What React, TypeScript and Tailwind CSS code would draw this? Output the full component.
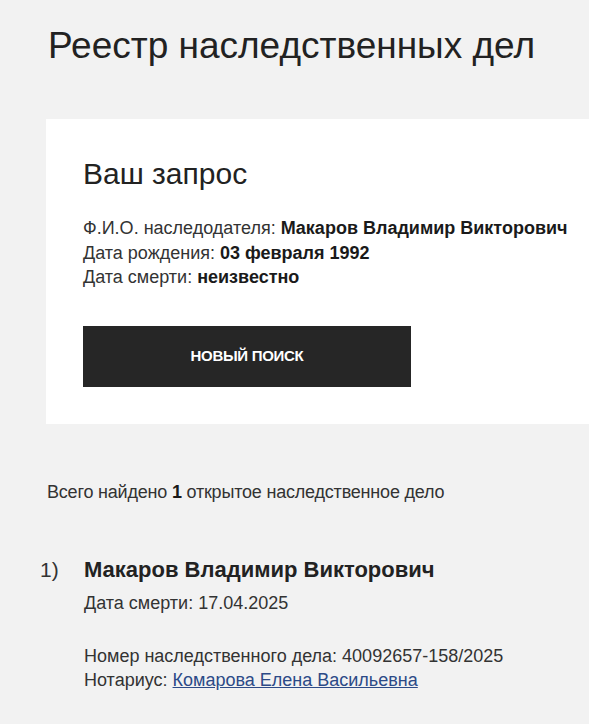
export default function App() {
  return (
    <div className="min-h-[724px] w-[589px] overflow-hidden bg-[#f2f2f2] text-[#222]" style={{ fontFamily: '"Liberation Sans", Arial, sans-serif' }}>
      <div className="pt-[25px] pl-[48px]">
        <h1 className="text-[37px] leading-[42px] font-normal">Реестр наследственных дел</h1>
      </div>
      <div className="ml-[46px] mt-[52px] w-[600px] bg-white pl-[37px] pt-[38px] pb-[37px]">
        <h2 className="text-[30px] leading-[34px] font-normal">Ваш запрос</h2>
        <div className="mt-[25px] text-[18px] leading-[24.5px] text-[#333]">
          <div>Ф.И.О. наследодателя: <b className="text-[#1a1a1a]">Макаров Владимир Викторович</b></div>
          <div>Дата рождения: <b className="text-[#1a1a1a]">03 февраля 1992</b></div>
          <div>Дата смерти: <b className="text-[#1a1a1a]">неизвестно</b></div>
        </div>
        <button className="mt-[36px] flex h-[61px] w-[328px] items-center justify-center bg-[#262626] text-[15px] font-bold text-white tracking-[-0.3px]">НОВЫЙ ПОИСК</button>
      </div>
      <div className="mt-[56px] pl-[47px] text-[18px] leading-[24px] text-[#333] tracking-[-0.2px]">
        Всего найдено <b className="text-[#1a1a1a]">1</b> открытое наследственное дело
      </div>
      <div className="mt-[51px] flex pl-[40px]">
        <div className="w-[44px] text-[21px] leading-[30px] text-[#333]">1)</div>
        <div>
          <div className="text-[22px] leading-[30px] font-bold text-[#222]">Макаров Владимир Викторович</div>
          <div className="mt-[6px] text-[18px] leading-[24px] text-[#333]">Дата смерти: 17.04.2025</div>
          <div className="mt-[29px] text-[18px] leading-[24px] text-[#333]">Номер наследственного дела: 40092657-158/2025</div>
          <div className="text-[18px] leading-[24px] text-[#333]">Нотариус: <a href="#" className="text-[#2c4a87] underline">Комарова Елена Васильевна</a></div>
        </div>
      </div>
    </div>
  );
}
